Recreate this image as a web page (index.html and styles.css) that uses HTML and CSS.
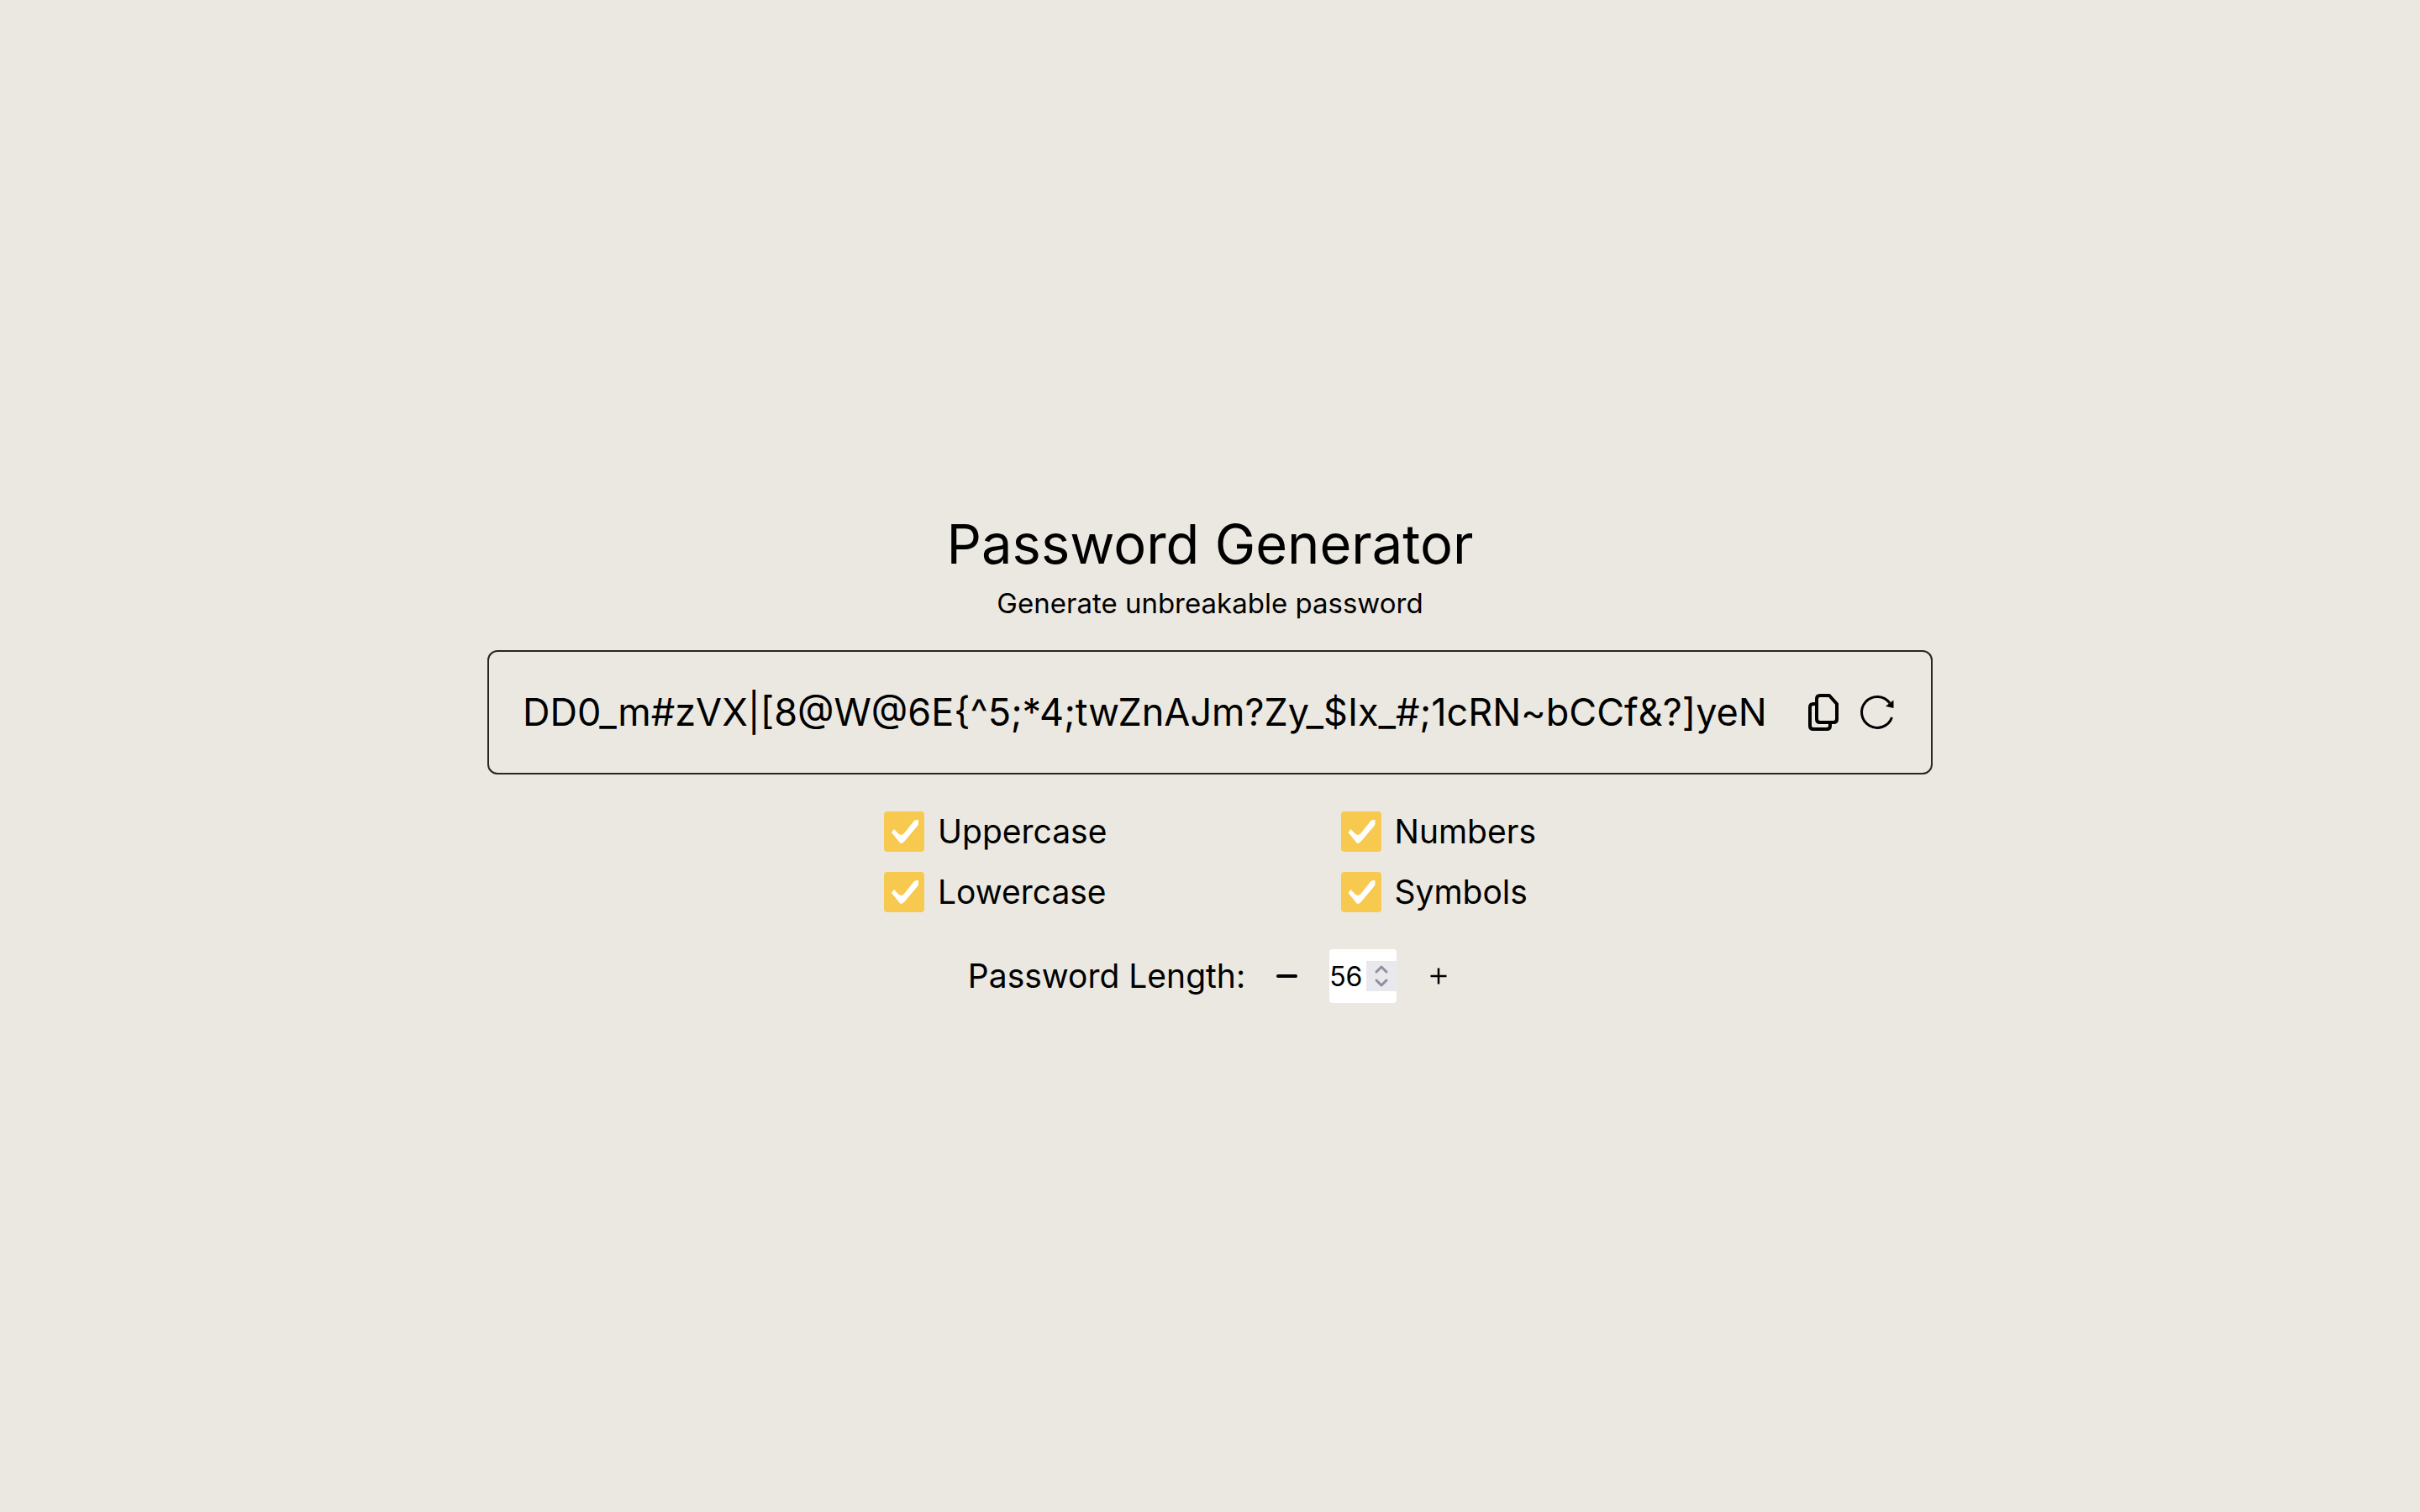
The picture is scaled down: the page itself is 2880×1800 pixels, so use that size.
FILE: index.html
```html
<!DOCTYPE html>
<html lang="en">
<head>
<meta charset="utf-8">
<meta name="viewport" content="width=device-width, initial-scale=1">
<title>Password Generator</title>
<link rel="stylesheet" href="styles.css">
</head>
<body>
<main class="generator">
  <h1 class="title">Password Generator</h1>
  <p class="subtitle">Generate unbreakable password</p>

  <section class="result" aria-label="Generated password">
    <output class="password">DD0_m#zVX|[8@W@6E{^5;*4;twZnAJm?Zy_$Ix_#;1cRN~bCCf&amp;?]yeN</output>
    <div class="actions">
      <button class="icon-button" type="button" aria-label="Copy password">
        <svg class="icon" viewBox="0 0 48 48" fill="none" stroke="currentColor" stroke-width="4" stroke-linejoin="round">
          <path d="M20 4H31L40 14V32Q40 36 36 36H20Q16 36 16 32V8Q16 4 20 4Z"/>
          <path d="M16 14H12Q8 14 8 18V40Q8 44 12 44H28Q32 44 32 40V36"/>
        </svg>
      </button>
      <button class="icon-button" type="button" aria-label="Generate a new password">
        <svg class="icon" viewBox="0 0 48 48" fill="none" stroke="currentColor" stroke-width="3">
          <path d="M41.500 30A18.500 18.500 0 1 1 39 13"/>
          <path d="M43.500 9.500V19L34 16.700Z" fill="currentColor" stroke="none"/>
        </svg>
      </button>
    </div>
  </section>

  <form class="options">
    <div class="choices">
      <div class="choice-column">
        <label class="choice"><input class="checkbox" type="checkbox" checked>Uppercase</label>
        <label class="choice"><input class="checkbox" type="checkbox" checked>Lowercase</label>
      </div>
      <div class="choice-column">
        <label class="choice"><input class="checkbox" type="checkbox" checked>Numbers</label>
        <label class="choice"><input class="checkbox" type="checkbox" checked>Symbols</label>
      </div>
    </div>
    <div class="length">
      <label class="length-label" for="length">Password Length:</label>
      <button class="icon-button" type="button" aria-label="Decrease length">
        <svg class="icon-small" viewBox="0 0 32 32" stroke="currentColor" stroke-width="4" stroke-linecap="round"><path d="M5 16H26"/></svg>
      </button>
      <div class="number">
        <input class="number-input" id="length" type="number" value="56">
        <svg class="spinner" viewBox="0 0 36 36" fill="none" stroke="currentColor" stroke-width="3" stroke-linecap="round" stroke-linejoin="round"><path d="M12 13L18 7L24 13M12 23L18 29L24 23"/></svg>
      </div>
      <button class="icon-button" type="button" aria-label="Increase length">
        <svg class="icon-small" viewBox="0 0 32 32" stroke="currentColor" stroke-width="2.500"><path d="M6.500 16H25.500M16 6.500V25.500"/></svg>
      </button>
    </div>
  </form>
</main>
</body>
</html>
```
FILE: styles.css
```css
* { box-sizing: border-box; }

body {
  margin: 0;
  min-height: 100vh;
  display: flex;
  align-items: center;
  justify-content: center;
  background: #ebe8e1;
  color: #000;
  font-family: Inter, "Liberation Sans", sans-serif;
}

.generator {
  display: flex;
  flex-direction: column;
  align-items: center;
  width: 100%;
  max-width: 1720px;
}

.title {
  margin: 0 0 4px;
  font-size: 65px;
  line-height: 84px;
  font-weight: 400;
}

.subtitle {
  margin: 0 0 32px;
  font-size: 33px;
  line-height: 48px;
}

.result {
  display: flex;
  align-items: center;
  justify-content: space-between;
  width: 100%;
  padding: 36px 40px;
  border: 2px solid #262626;
  border-radius: 12px;
}

.password {
  font-size: 45px;
  line-height: 72px;
}

.actions {
  display: flex;
  gap: 16px;
}

.icon-button {
  display: flex;
  padding: 0;
  border: 0;
  background: none;
  color: inherit;
  cursor: pointer;
}

.icon { width: 48px; height: 48px; }
.icon-small { width: 32px; height: 32px; }

.options {
  width: 776px;
  max-width: 100%;
  margin-top: 40px;
}

.choices {
  display: flex;
  justify-content: space-between;
}

.choice-column {
  display: flex;
  flex-direction: column;
  gap: 16px;
}

.choice {
  display: flex;
  align-items: center;
  gap: 16px;
  font-size: 39px;
  line-height: 56px;
}

.checkbox {
  appearance: none;
  width: 48px;
  height: 48px;
  margin: 0;
  border-radius: 4px;
  background: #fff;
}

.checkbox:checked { background: #f7c94f; }

.checkbox:checked::before {
  content: "";
  display: block;
  width: 48px;
  height: 48px;
  background: #fff;
  clip-path: path("M9 25L12 21Q18 28 20 28Q22 28 24 26L36 11Q37 10 41 10V14Q41 16 40 17L24 36Q22 38 20 38Q19 38 18 36Z");
}

.length {
  display: flex;
  align-items: center;
  justify-content: center;
  gap: 34px;
  margin-top: 40px;
}

.length-label {
  font-size: 39px;
  line-height: 56px;
}

.number {
  position: relative;
  width: 80px;
  height: 64px;
}

.number-input {
  appearance: textfield;
  width: 100%;
  height: 100%;
  padding: 0;
  border: 0;
  border-radius: 4px;
  background: #fff;
  color: inherit;
  font: inherit;
  font-size: 32px;
}

.number-input::-webkit-inner-spin-button {
  appearance: none;
  margin: 0;
}

.spinner {
  position: absolute;
  top: 14px;
  right: 0;
  width: 36px;
  height: 36px;
  background: #e9e9ed;
  color: #8f8f9d;
  pointer-events: none;
}
```
